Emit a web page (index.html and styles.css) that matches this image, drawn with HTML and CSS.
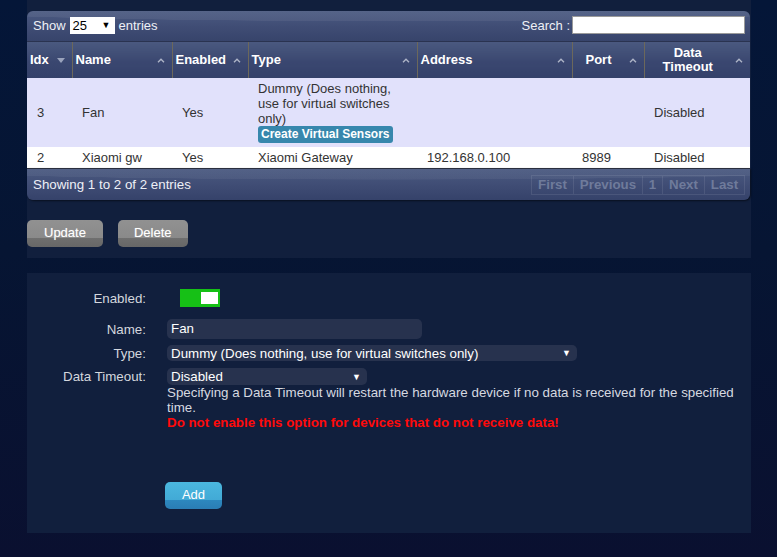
FILE: index.html
```html
<!DOCTYPE html>
<html>
<head>
<meta charset="utf-8">
<link rel="stylesheet" href="styles.css">
</head>
<body>
<div class="page">
  <div class="panel panel-top">
    <div class="dt-wrap">
      <div class="dt-toolbar">
        <div class="dt-length">Show <span class="mini-select">25<span class="mini-arrow">▼</span></span> entries</div>
        <div class="dt-search">Search :<span class="search-box"></span></div>
      </div>
      <table class="dt">
        <colgroup>
          <col style="width:45px"><col style="width:100px"><col style="width:76px"><col style="width:169px"><col style="width:155px"><col style="width:72px"><col style="width:106px">
        </colgroup>
        <thead>
          <tr>
            <th>Idx<span class="sort sort-desc"><svg width="8" height="5" viewBox="0 0 8 5"><path d="M0 0h8L4 5z" fill="#9aa3bc"/></svg></span></th>
            <th>Name<span class="sort"><svg width="8" height="5" viewBox="0 0 8 5"><path d="M1 4.2L4 1.2L7 4.2" fill="none" stroke="#aeb5c8" stroke-width="1.4"/></svg></span></th>
            <th>Enabled<span class="sort"><svg width="8" height="5" viewBox="0 0 8 5"><path d="M1 4.2L4 1.2L7 4.2" fill="none" stroke="#aeb5c8" stroke-width="1.4"/></svg></span></th>
            <th>Type<span class="sort"><svg width="8" height="5" viewBox="0 0 8 5"><path d="M1 4.2L4 1.2L7 4.2" fill="none" stroke="#aeb5c8" stroke-width="1.4"/></svg></span></th>
            <th>Address<span class="sort"><svg width="8" height="5" viewBox="0 0 8 5"><path d="M1 4.2L4 1.2L7 4.2" fill="none" stroke="#aeb5c8" stroke-width="1.4"/></svg></span></th>
            <th class="center">Port<span class="sort"><svg width="8" height="5" viewBox="0 0 8 5"><path d="M1 4.2L4 1.2L7 4.2" fill="none" stroke="#aeb5c8" stroke-width="1.4"/></svg></span></th>
            <th class="center">Data<br>Timeout<span class="sort"><svg width="8" height="5" viewBox="0 0 8 5"><path d="M1 4.2L4 1.2L7 4.2" fill="none" stroke="#aeb5c8" stroke-width="1.4"/></svg></span></th>
          </tr>
        </thead>
        <tbody>
          <tr class="row-sel">
            <td>3</td>
            <td>Fan</td>
            <td>Yes</td>
            <td class="top">Dummy (Does nothing, use for virtual switches only)<span class="vs-btn">Create Virtual Sensors</span></td>
            <td></td>
            <td></td>
            <td>Disabled</td>
          </tr>
          <tr class="row-plain">
            <td>2</td>
            <td>Xiaomi gw</td>
            <td>Yes</td>
            <td>Xiaomi Gateway</td>
            <td>192.168.0.100</td>
            <td>8989</td>
            <td>Disabled</td>
          </tr>
        </tbody>
      </table>
      <div class="dt-footer">
        <div class="dt-info">Showing 1 to 2 of 2 entries</div>
        <div class="dt-pages">
          <span class="pg pg-first">First</span><span class="pg pg-prev">Previous</span><span class="pg pg-num">1</span><span class="pg pg-next">Next</span><span class="pg pg-last">Last</span>
        </div>
      </div>
    </div>
    <div class="actions">
      <span class="btn-gray">Update</span>
      <span class="btn-gray">Delete</span>
    </div>
  </div>

  <div class="panel panel-form">
    <div class="frow row-enabled">
      <div class="lbl">Enabled:</div>
      <div class="toggle"><span class="knob"></span></div>
    </div>
    <div class="frow row-name">
      <div class="lbl">Name:</div>
      <div class="inp inp-name">Fan</div>
    </div>
    <div class="frow row-type">
      <div class="lbl">Type:</div>
      <div class="sel sel-type"><span>Dummy (Does nothing, use for virtual switches only)</span><span class="sel-arrow">▼</span></div>
    </div>
    <div class="frow row-dt">
      <div class="lbl">Data Timeout:</div>
      <div class="dt-col">
        <div class="sel sel-dt"><span>Disabled</span><span class="sel-arrow">▼</span></div>
        <div class="desc">Specifying a Data Timeout will restart the hardware device if no data is received for the specified time.</div>
        <div class="warn">Do not enable this option for devices that do not receive data!</div>
      </div>
    </div>
    <div class="add-row">
      <span class="btn-blue">Add</span>
    </div>
  </div>
</div>
</body>
</html>
```

FILE: styles.css
```css
* { box-sizing: border-box; }
html, body { margin: 0; padding: 0; }
body {
  font-family: "Liberation Sans", Arial, sans-serif;
  font-size: 13px;
  background: #0a1030;
}
.page {
  width: 777px;
  height: 557px;
  overflow: hidden;
  background: linear-gradient(#041638 0%, #061533 45%, #0a1030 100%);
}
.panel {
  margin-left: 27px;
  width: 724px;
  background: #111f3d;
}
.panel-top {
  height: 258px;
  padding-top: 11px;
}
.dt-wrap {
  width: 723px;
}
.dt-toolbar {
  height: 31px;
  border-radius: 6px 6px 0 0;
  background:
    radial-gradient(ellipse 900px 30px at 50% -8px, rgba(255,255,255,0.06) 0 60%, transparent 61%),
    linear-gradient(#4b5a81, #3f4c74 55%, #37446b);
  display: flex;
  align-items: center;
  justify-content: space-between;
  padding: 0 5px 2px 6px;
  color: #eef0f6;
  border-bottom: 1px solid #2a3350;
}
.dt-length { display: flex; align-items: center; gap: 4px; }
.mini-select {
  display: inline-flex;
  align-items: center;
  justify-content: space-between;
  width: 45px;
  height: 17px;
  background: #fff;
  color: #000;
  padding: 0 4px 0 3px;
  font-size: 13px;
}
.mini-arrow { font-size: 9px; }
.dt-search { display: flex; align-items: center; gap: 2px; }
.search-box {
  display: inline-block;
  width: 173px;
  height: 18px;
  background: #fff;
  border: 1px solid #9a9a9a;
}
table.dt {
  width: 723px;
  border-collapse: collapse;
  table-layout: fixed;
}
.dt th {
  position: relative;
  height: 36px;
  padding: 0 22px 0 3px;
  text-align: left;
  font-weight: bold;
  line-height: 14px;
  color: #fff;
  background: linear-gradient(#4a597f, #3a4770 55%, #34416a);
  border-left: 1px solid #6c685b;
}
.dt th:first-child { border-left: none; }
.dt th.center { text-align: center; }
.sort {
  position: absolute;
  right: 7px;
  top: 16px;
  line-height: 0;
}
.dt td {
  padding: 3px 10px 4px 10px;
  line-height: 15px;
  color: #333;
  vertical-align: middle;
}
.dt td.top { vertical-align: top; }
.row-sel td { background: #e1e1fb; }
.row-plain td { background: #fff; padding: 3px 10px; }
.vs-btn {
  display: block;
  width: max-content;
  height: 17px;
  line-height: 17px;
  padding: 0 3px;
  background: #3787ad;
  color: #fff;
  font-weight: bold;
  font-size: 12px;
  border-radius: 3px;
}
.dt-footer {
  height: 32px;
  border-radius: 0 0 6px 6px;
  background:
    radial-gradient(ellipse 900px 24px at 50% -4px, rgba(255,255,255,0.05) 0 60%, transparent 61%),
    linear-gradient(#4a5980, #3f4c74 55%, #35426a);
  border-top: 1px solid #2a2f3f;
  box-shadow: 1px 1px 2px rgba(0,0,0,0.5);
  display: flex;
  align-items: center;
  justify-content: space-between;
  padding: 0 5px 0 6px;
  color: #eef0f6;
}
.dt-info { font-size: 13.33px; }
.dt-pages { display: flex; }
.pg {
  height: 20px;
  line-height: 18px;
  text-align: center;
  border: 1px solid rgba(255,255,255,0.09);
  border-right: none;
  color: #6f7b9b;
  font-weight: bold;
  font-size: 13.33px;
}
.pg-first { width: 42px; }
.pg-prev { width: 69px; }
.pg-num { width: 20px; }
.pg-next { width: 42px; }
.pg-last { width: 41px; border-right: 1px solid rgba(255,255,255,0.09); }
.actions {
  display: flex;
  gap: 15px;
  margin-top: 20px;
}
.btn-gray {
  height: 27px;
  line-height: 26px;
  padding: 0 17px;
  border-radius: 5px;
  color: #fff;
  background: linear-gradient(#919191 0%, #8a8a8a 65%, #6f6f6f 66%, #676767 100%);
  text-shadow: 0 0 1px rgba(255,255,255,0.4);
}
.btn-gray + .btn-gray { padding: 0 16px; }
.panel-form {
  margin-top: 15px;
  height: 260px;
  padding-top: 16px;
  color: #d6d9e0;
  font-size: 13.33px;
}
.frow { display: flex; }
.lbl {
  width: 119px;
  margin-right: 21px;
  text-align: right;
  color: #d4d7de;
}
.row-enabled { height: 18px; align-items: center; }
.toggle {
  width: 40px;
  height: 18px;
  margin-left: 13px;
  background: #16c016;
  position: relative;
}
.knob {
  position: absolute;
  right: 2px;
  top: 3px;
  width: 17px;
  height: 12px;
  background: #fff;
}
.row-name { margin-top: 12px; align-items: center; }
.inp {
  height: 20px;
  line-height: 20px;
  border-radius: 5px;
  background: #27324e;
  color: #fff;
  padding: 0 4px;
}
.inp-name { width: 255px; }
.row-type { margin-top: 6px; align-items: center; }
.sel {
  display: flex;
  justify-content: space-between;
  align-items: center;
  border-radius: 5px;
  background: #27324e;
  color: #fff;
  padding: 0 6px 0 4px;
}
.sel-type { width: 410px; height: 16px; }
.sel-dt { width: 200px; height: 17px; }
.sel-arrow { font-size: 9px; }
.row-dt { margin-top: 7px; }
.row-dt .lbl { line-height: 17px; }
.desc {
  width: 584px;
  line-height: 15px;
  color: #d6d9e0;
}
.warn {
  line-height: 15px;
  color: #ff0a0a;
  font-weight: bold;
}
.add-row {
  margin-top: 52px;
  padding-left: 138px;
}
.btn-blue {
  display: inline-block;
  height: 27px;
  line-height: 26px;
  width: 57px;
  text-align: center;
  border-radius: 5px;
  color: #fff;
  font-size: 13px;
  background: linear-gradient(#4bb7df 0%, #42aad6 65%, #2d88bf 66%, #2a7db5 100%);
}
```
